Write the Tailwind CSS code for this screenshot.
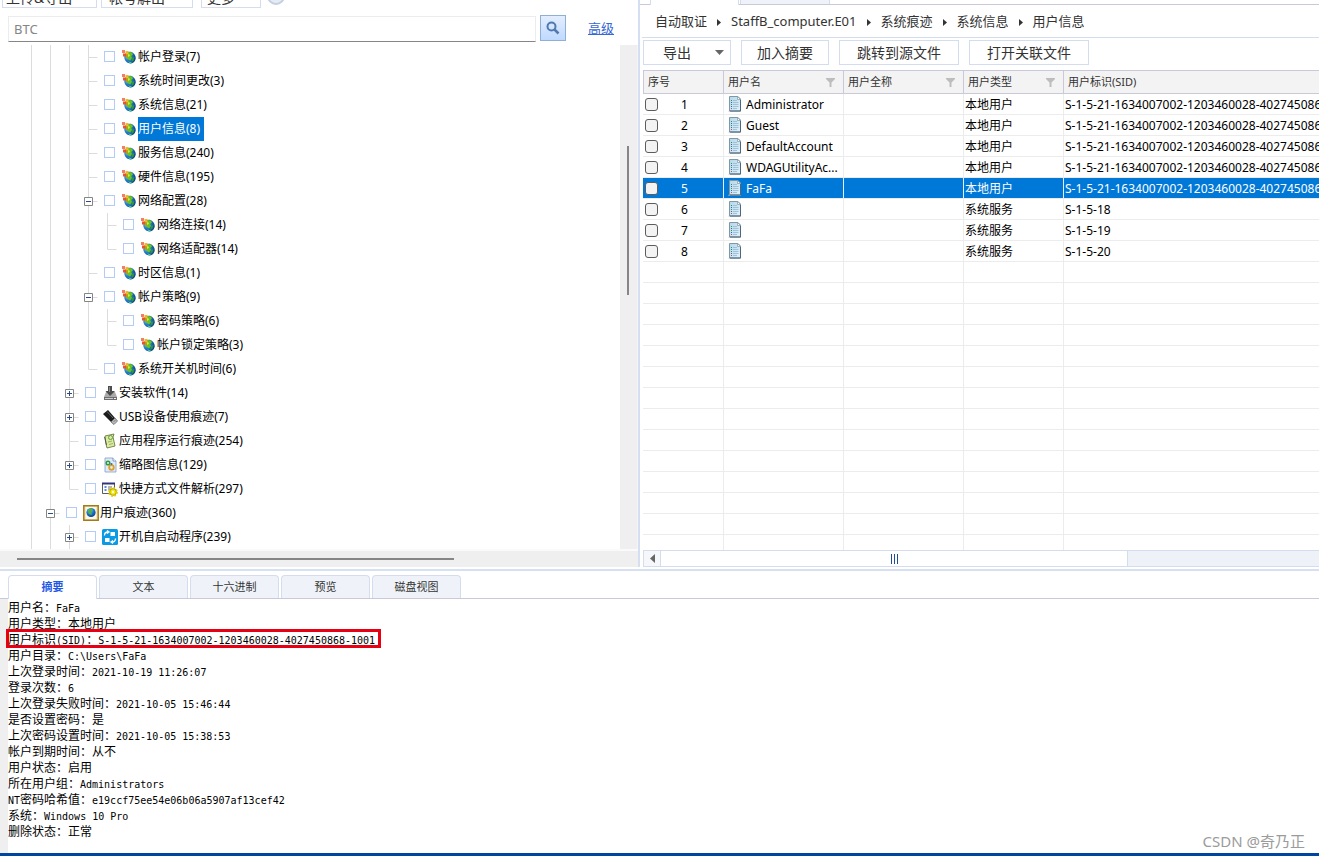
<!DOCTYPE html>
<html lang="zh-CN">
<head>
<meta charset="utf-8">
<title>自动取证 - 用户信息</title>
<script src="https://cdn.jsdelivr.net/npm/@tailwindcss/browser@4"></script>
</head>
<body class="flex min-h-screen flex-col overflow-hidden bg-white font-['Noto_Sans','Noto_Sans_CJK_SC',sans-serif] text-xs text-black">

<svg class="absolute size-0" aria-hidden="true">
  <defs>
    <radialGradient id="sea" cx=".4" cy=".3" r=".8"><stop offset="0" stop-color="#6ec2f0"/><stop offset=".5" stop-color="#1c74c8"/><stop offset="1" stop-color="#08306f"/></radialGradient>
    <linearGradient id="paper" x1="0" y1="0" x2="1" y2="1"><stop offset="0" stop-color="#b4d6e8"/><stop offset="1" stop-color="#e2f2fb"/></linearGradient>
    <symbol id="i-globe" viewBox="0 0 16 16">
      <ellipse cx="9" cy="8.6" rx="5.6" ry="6" transform="rotate(-35 9 8.6)" fill="url(#sea)"/>
      <path d="M4 5.500 8 3l3 .5 1 2-2 1.500 1 2-2 2.500-2-1.500-2-1z" fill="#69c31c"/>
      <path d="M6 6l2-1 1 1.500-1.500 1.500z" fill="#d8ec3c"/>
      <path d="M11 9l2.500-1-1 3.500-2 1.500z" fill="#2d9a34"/>
      <path d="M7 12.500l3 .5 1 1-2 .5z" fill="#4cc8a0"/>
      <rect x="1" y="1" width="3" height="3" fill="#f08060"/><rect x="4.500" y="2" width="3" height="3" fill="#f4b42c"/><rect x="2" y="4.500" width="3" height="3" fill="#e8542c"/><rect x="5" y="6" width="2" height="2" fill="#ee7c22"/>
    </symbol>
    <symbol id="i-install" viewBox="0 0 16 16">
      <path d="M4 7h9l2 5v3H2v-3z" fill="#aaa"/><path d="M2 12h13v3H2z" fill="#6d6d6d"/><path d="M3 13h8v1H3z" fill="#ccc"/><path d="M12 13h2v1h-2z" fill="#f4f4f4"/>
      <path d="M6 1h4v5h3L8 11 3.500 6H6z" fill="#4c4c4c"/><path d="M7 2h1v5H7z" fill="#888"/>
    </symbol>
    <symbol id="i-usb" viewBox="0 0 16 16">
      <path d="M1 5 6 1l7 8-4 4z" fill="#1d1d1d"/><path d="M5 2.500 11 9" stroke="#666" stroke-width="1"/><path d="m9 13 4-4 2.500 3-3.500 3.500z" fill="#bdbdbd" stroke="#555" stroke-width=".7"/><path d="M12 12.500l1-1" stroke="#333"/>
    </symbol>
    <symbol id="i-app" viewBox="0 0 16 16">
      <path d="M3 3 12 1l-1 3 2 9-8 2-1-4z" fill="#dceba0" stroke="#6b7a42" stroke-width=".9"/><circle cx="8.500" cy="4.500" r="2" fill="none" stroke="#62a040"/><path d="M6 9l4-1M7 11.500l4-1" stroke="#8aa656" stroke-width=".8"/><path d="m2.500 4 2 8" stroke="#444" stroke-width=".8"/>
    </symbol>
    <symbol id="i-thumb" viewBox="0 0 16 16">
      <path d="M3 1h8l3 3v11H3z" fill="#dceafc" stroke="#8ea6cf" stroke-width=".9"/><path d="M11 1v3h3" fill="#fff" stroke="#6c86b8" stroke-width=".8"/>
      <circle cx="6" cy="6" r="1.800" fill="none" stroke="#2f9b3a" stroke-width="1.500"/><circle cx="9.500" cy="10.500" r="2.300" fill="none" stroke="#e0a020" stroke-width="1.800"/><circle cx="9.500" cy="7" r="1" fill="#3568c4"/>
    </symbol>
    <symbol id="i-link" viewBox="0 0 16 16">
      <path d="M.5 2.500h12v10H.5z" fill="#fff" stroke="#333" stroke-width=".8"/><path d="M0 1.500h13v2H0z" fill="#34347c"/><path d="M2.500 6h2M2.500 9h2" stroke="#2262cc" stroke-width="1.600"/><path d="M6 6h4M6 8h2" stroke="#444" stroke-width=".8"/>
      <circle cx="11" cy="11" r="3.400" fill="#f6e800" stroke="#6c6400" stroke-width=".6"/><circle cx="11" cy="11" r="4.100" fill="none" stroke="#e4cc00" stroke-width="1.600" stroke-dasharray="1.700 1.500"/><circle cx="11" cy="11" r="1.200" fill="#fff"/>
    </symbol>
    <symbol id="i-user" viewBox="0 0 16 16">
      <path d="M.8.8h14.400v14.400H.8z" fill="#f4e8b8" stroke="#a47a18" stroke-width="1.500"/><path d="M3 2h10v12H3z" fill="#f8f8f0"/><circle cx="8" cy="7.500" r="4.600" fill="url(#sea)"/><path d="M5 5l3-2 2 2-2 2 1 3-3-1z" fill="#52b43c"/>
    </symbol>
    <symbol id="i-boot" viewBox="0 0 16 16">
      <rect width="16" height="16" rx="1.500" fill="#0a9be4"/><path d="M8.500 3h4.500v4H8.500zM3 9h4.500v4H3z" fill="#fff"/><path d="M2.500 6.500C2.500 4 4 3 6 3M5 1.500 7 3 5 4.500M13.500 9.500c0 2.500-1.500 3.500-3.500 3.500m1-1.500L9 13l2 1.500" fill="none" stroke="#fff" stroke-width="1.300"/>
    </symbol>
    <symbol id="i-doc" viewBox="0 0 14 16">
      <path d="M1 14.500h12v1H0z" fill="#d4d4d4"/><path d="M1.500.5h8.500l2.500 2.500v12h-11z" fill="url(#paper)" stroke="#7f98a8"/><path d="M12.500 4v11H2" fill="none" stroke="#4c687c"/><path d="M9.500.5v3h3z" fill="#fff" stroke="#7b95a6" stroke-width=".7"/>
      <path d="M5 4.500h4M5 6.500h5.500M5 8.500h5.500M5 10.500h5.500M5 12.500h4" stroke="#94b8d0" stroke-width=".8"/><path d="M3 4.500h1M3 8.500h1" stroke="#1d9a58"/><path d="M3 6.500h1M3 10.500h1" stroke="#3464c0"/><path d="M3 12.500h1" stroke="#c05050"/>
    </symbol>
    <symbol id="i-filter" viewBox="0 0 9 9"><path d="M0 0h9v1L5.500 4.500V9h-2V4.500L0 1z" fill="#bdbdbd"/></symbol>
  </defs>
</svg>

<div class="grid grid-cols-[638px_minmax(0,1fr)]">
  <!-- Left pane: search and evidence tree -->
  <section class="flex min-w-0 flex-col">
    <div class="flex h-2 items-end overflow-hidden pl-0.5 text-sm text-[#333]">
      <button class="mr-1 h-[26px] w-[95px] shrink-0 border border-[#d3ddee] pt-1.5 pl-[3px] text-left leading-[18px]">上传&amp;导出</button>
      <button class="mr-2 h-[26px] w-[92px] shrink-0 border border-[#d3ddee] pt-1.5 pl-[7px] text-left leading-[18px]">帐号解出</button>
      <button class="mr-1.5 h-[26px] w-[60px] shrink-0 border border-[#d3ddee] pt-1.5 pl-[5px] text-left leading-[18px]">更多</button>
      <button aria-label="帮助" class="mb-[3px] size-[18px] shrink-0 rounded-full border-2 border-[#c3cfe2] bg-[#e6ebf3]"></button>
    </div>
    <form class="flex h-[37px] items-start pt-[7px] pl-2">
      <input type="text" aria-label="搜索" placeholder="BTC" class="mt-px h-[26px] w-[528px] border border-[#ececec] border-b-[#868686] px-[5px] text-[13px] text-[#333] outline-none placeholder:text-[#858585]">
      <button type="button" aria-label="搜索" class="ml-1 flex size-[26px] items-center justify-center border border-[#8fb0d4] bg-linear-to-b from-[#e3eeff] to-[#bfd9ff]">
        <svg class="size-3.5" viewBox="0 0 14 14" fill="none" stroke="#5079ae"><circle cx="5.500" cy="5.500" r="4" stroke-width="2"/><path d="m8.500 8.500 4 4" stroke-width="2.500"/></svg>
      </button>
      <a href="#" class="mt-1 ml-[22px] text-[13px] leading-[18px] text-[#3567d6] underline">高级</a>
    </form>
    <div class="flex">
      <ul id="tree" class="min-w-0 flex-1"></ul>
      <div class="flex w-[17px] justify-center bg-[#efefef] pt-[101px] pr-px"><div class="h-[149px] w-0.5 bg-[#868686]"></div></div>
      <div class="w-px bg-[#f5f5f5]"></div>
    </div>
    <div class="h-[18px] border-t-2 border-[#fafafa] bg-[#efefef] pt-[7px] pl-[17px]"><div class="h-0.5 w-[437px] bg-[#868686]"></div></div>
  </section>

  <!-- Right pane: breadcrumb, actions and result grid -->
  <section class="flex min-w-0 flex-col border-l-2 border-[#d6dff1]">
    <div class="flex h-[5px] items-stretch border-b border-[#c9c9da]">
      <div class="-mb-px ml-2.5 w-[89px] border-x border-[#d3ddee] bg-white"></div>
      <div class="ml-px w-[90px] border-x border-[#d3ddee] bg-[#eff3f9]"></div>
    </div>
    <nav class="ml-0.5 flex h-[33px] items-center gap-2.5 border-b border-[#d3ddee] pt-0.5 pl-[13px] text-[13px] text-[#333]">
      <a href="#">自动取证</a><svg class="h-[7px] w-1 fill-[#333]" viewBox="0 0 4 7"><path d="M0 0v7l4-3.500z"/></svg>
      <a href="#">StaffB_computer.E01</a><svg class="h-[7px] w-1 fill-[#333]" viewBox="0 0 4 7"><path d="M0 0v7l4-3.500z"/></svg>
      <a href="#">系统痕迹</a><svg class="h-[7px] w-1 fill-[#333]" viewBox="0 0 4 7"><path d="M0 0v7l4-3.500z"/></svg>
      <a href="#">系统信息</a><svg class="h-[7px] w-1 fill-[#333]" viewBox="0 0 4 7"><path d="M0 0v7l4-3.500z"/></svg>
      <a href="#">用户信息</a>
    </nav>
    <div class="flex h-8 items-start gap-2.5 pt-0.5 pl-[3px] text-sm text-[#333]">
      <button class="flex h-[25px] w-[88px] items-center justify-between border border-[#d3ddee] pr-1.5 pl-[19px]">导出<svg class="h-[5px] w-[9px] fill-[#666]" viewBox="0 0 9 5"><path d="M0 0h9L4.500 5z"/></svg></button>
      <button class="h-[25px] w-[88px] border border-[#d3ddee] leading-5">加入摘要</button>
      <button class="h-[25px] w-[120px] border border-[#d3ddee] leading-5">跳转到源文件</button>
      <button class="h-[25px] w-[120px] border border-[#d3ddee] leading-5">打开关联文件</button>
    </div>
    <div class="ml-[3px] flex-1 overflow-hidden">
      <table class="w-full table-fixed border-separate border-spacing-0">
        <colgroup><col class="w-[81px]"><col class="w-[120px]"><col class="w-[120px]"><col class="w-[100px]"><col></colgroup>
        <thead>
          <tr class="h-6 bg-[#f3f3f3] text-left text-[11px] text-[#333]">
            <th class="border border-[#c9c9da] p-0 pl-1 font-normal">序号</th>
            <th class="border-y border-r border-[#c9c9da] p-0 pr-2 pl-1 font-normal"><div class="flex items-center justify-between">用户名<svg class="size-[9px]"><use href="#i-filter"/></svg></div></th>
            <th class="border-y border-r border-[#c9c9da] p-0 pr-2 pl-1 font-normal"><div class="flex items-center justify-between">用户全称<svg class="size-[9px]"><use href="#i-filter"/></svg></div></th>
            <th class="border-y border-r border-[#c9c9da] p-0 pr-2 pl-1 font-normal"><div class="flex items-center justify-between">用户类型<svg class="size-[9px]"><use href="#i-filter"/></svg></div></th>
            <th class="border-y border-[#c9c9da] p-0 pl-1 font-normal">用户标识(SID)</th>
          </tr>
        </thead>
        <tbody id="rows"></tbody>
      </table>
    </div>
    <div class="ml-[3px] flex h-[17px] border-y border-[#d3ddee] bg-[#eef2f8]">
      <button aria-label="向左滚动" class="flex w-[18px] items-center justify-center border-x border-[#d3ddee] bg-[#f5f7fb]"><svg class="h-[9px] w-[5px] fill-[#666]" viewBox="0 0 5 9"><path d="M5 0v9L0 4.500z"/></svg></button>
      <div class="flex w-[467px] items-center justify-center gap-0.5 border-r border-[#d3ddee] bg-white"><i class="h-2.5 w-px bg-[#1c4f94]"></i><i class="h-2.5 w-px bg-[#1c4f94]"></i><i class="h-2.5 w-px bg-[#1c4f94]"></i></div>
    </div>
  </section>
</div>

<!-- Detail pane -->
<section class="mt-0.5 flex flex-1 flex-col border-t-2 border-[#d6e0f0]">
  <div role="tablist" class="mt-1 flex h-6 items-stretch gap-0.5 border-b border-[#c9c9da] pl-2 text-[11px] text-[#333]">
    <button role="tab" aria-selected="true" class="-mb-px w-[89px] rounded-t border border-b-0 border-[#d3ddee] bg-white font-bold text-[#2257e6]">摘要</button>
    <button role="tab" class="w-[89px] rounded-t border border-b-0 border-[#d3ddee] bg-[#eff3f9]">文本</button>
    <button role="tab" class="w-[89px] rounded-t border border-b-0 border-[#d3ddee] bg-[#eff3f9]">十六进制</button>
    <button role="tab" class="w-[89px] rounded-t border border-b-0 border-[#d3ddee] bg-[#eff3f9]">预览</button>
    <button role="tab" class="w-[89px] rounded-t border border-b-0 border-[#d3ddee] bg-[#eff3f9]">磁盘视图</button>
  </div>
  <div class="relative flex flex-1">
    <div class="w-2 bg-[#efefef]"></div>
    <div id="detail" class="flex-1 pt-px whitespace-pre leading-4"></div>
    <div class="absolute top-[30px] left-1.5 h-[19px] w-[375px] border-3 border-[#e60012]"></div>
    <p class="absolute right-3.5 bottom-0.5 text-[15px] text-[#9b9b9b]">CSDN @奇乃正</p>
  </div>
  <div class="h-[3px] bg-[#0046a0]"></div>
</section>

<script>
// [ancestor guides, connector, icon, label]; connectors: t = tee, l = last child, + / - = expander
const nodes = [
  [3,'t','globe','帐户登录(7)'],[3,'t','globe','系统时间更改(3)'],[3,'t','globe','系统信息(21)'],[3,'t','globe','用户信息(8)'],
  [3,'t','globe','服务信息(240)'],[3,'t','globe','硬件信息(195)'],[3,'-','globe','网络配置(28)'],[4,'t','globe','网络连接(14)'],
  [4,'l','globe','网络适配器(14)'],[3,'t','globe','时区信息(1)'],[3,'-','globe','帐户策略(9)'],[4,'t','globe','密码策略(6)'],
  [4,'l','globe','帐户锁定策略(3)'],[3,'l','globe','系统开关机时间(6)'],[2,'+','install','安装软件(14)'],[2,'+','usb','USB设备使用痕迹(7)'],
  [2,'t','app','应用程序运行痕迹(254)'],[2,'+','thumb','缩略图信息(129)'],[2,'l','link','快捷方式文件解析(297)'],
  [1,'-','user','用户痕迹(360)'],[2,'+','boot','开机自启动程序(239)']
];
const guide = '<svg class="h-6 w-[19px] shrink-0" viewBox="0 0 19 24"><path d="M5.500 0v24" stroke="#dcdcdc"/></svg>';
const joint = k => {
  const lines = `<path d="M5.500 ${k === 'l' ? '0v12.500' : '0v24'}M5.500 12.500h9" fill="none" stroke="#dcdcdc"/>`;
  if (k === 't' || k === 'l') return `<svg class="h-6 w-[21px] shrink-0" viewBox="0 0 21 24">${lines}</svg>`;
  return `<button class="shrink-0" aria-label="${k === '+' ? '展开' : '折叠'}"><svg class="h-6 w-[21px]" viewBox="0 0 21 24">${lines}<path d="M1.500 8.500h8v8h-8z" fill="#fff" stroke="#858585"/><path d="M3 12.500h5${k === '+' ? 'M5.500 10v5' : ''}" stroke="#2b4a8c"/></svg></button>`;
};
document.getElementById('tree').innerHTML = nodes.map(([depth, k, icon, label], i) => `
  <li class="flex h-6 items-center pl-[26px]">${guide.repeat(depth)}${joint(k)}
    <input type="checkbox" id="n${i}" class="mb-0.5 size-[11px] shrink-0 appearance-none border border-[#b4cbf5] bg-white">
    <svg class="mr-px ml-1.5 size-4 shrink-0"><use href="#i-${icon}"/></svg>
    <label for="n${i}" class="${i === 3 ? 'bg-[#0078d7] text-white pr-1 leading-6' : 'leading-6'}">${label}</label>
  </li>`).join('');

const sid = 'S-1-5-21-1634007002-1203460028-4027450868-';
const users = [
  ['Administrator','本地用户',sid+'500'],['Guest','本地用户',sid+'501'],['DefaultAccount','本地用户',sid+'503'],
  ['WDAGUtilityAc...','本地用户',sid+'504'],['FaFa','本地用户',sid+'1001'],['','系统服务','S-1-5-18'],['','系统服务','S-1-5-19'],['','系统服务','S-1-5-20']
];
const filled = users.map(([name, type, id], i) => `
  <tr class="${i === 4 ? 'h-[21px] bg-[#0078d7] text-white' : 'h-[21px]'}">
    <td class="border-r border-b border-[#ececec] p-0"><div class="flex h-5 items-center pl-0.5"><input type="checkbox" aria-label="选择 ${i + 1}" class="size-[13px] appearance-none rounded-[3px] border border-[#5c5c5c] bg-[#f3f3f3]"><span class="ml-[23px] pt-0.5 leading-[18px]">${i + 1}</span></div></td>
    <td class="border-r border-b border-[#ececec] p-0"><div class="flex h-5 items-center pl-1"><svg class="mr-1 h-4 w-3.5 shrink-0"><use href="#i-doc"/></svg><span class="pt-0.5 leading-[18px] whitespace-nowrap">${name}</span></div></td>
    <td class="border-r border-b border-[#ececec] p-0"></td>
    <td class="border-r border-b border-[#ececec] p-0 pt-0.5 pl-px leading-[18px]">${type}</td>
    <td class="overflow-hidden border-b border-[#ececec] p-0 pt-0.5 pl-px leading-[18px] whitespace-nowrap">${id}</td>
  </tr>`).join('');
const line = '<td class="border-r border-b border-[#ececec] p-0"></td>';
const tail = '<td class="h-[15px] border-r border-[#ececec] p-0"></td>';
document.getElementById('rows').innerHTML = filled
  + `<tr class="h-[21px]">${line.repeat(4)}<td class="border-b border-[#ececec] p-0"></td></tr>`.repeat(13)
  + `<tr>${tail.repeat(4)}<td></td></tr>`;

const details = `用户名：FaFa
用户类型：本地用户
用户标识(SID)：S-1-5-21-1634007002-1203460028-4027450868-1001
用户目录：C:\\Users\\FaFa
上次登录时间：2021-10-19 11:26:07
登录次数：6
上次登录失败时间：2021-10-05 15:46:44
是否设置密码：是
上次密码设置时间：2021-10-05 15:38:53
帐户到期时间：从不
用户状态：启用
所在用户组：Administrators
NT密码哈希值：e19ccf75ee54e06b06a5907af13cef42
系统：Windows 10 Pro
删除状态：正常`;
document.getElementById('detail').innerHTML = details.split('\n').map(l =>
  `<p class="h-4">${l.replace(/[\x20-\x7e]+/g, s => `<span class="font-['DejaVu_Sans_Mono',monospace] text-[10px] leading-4">${s}</span>`)}</p>`).join('');
</script>
</body>
</html>
